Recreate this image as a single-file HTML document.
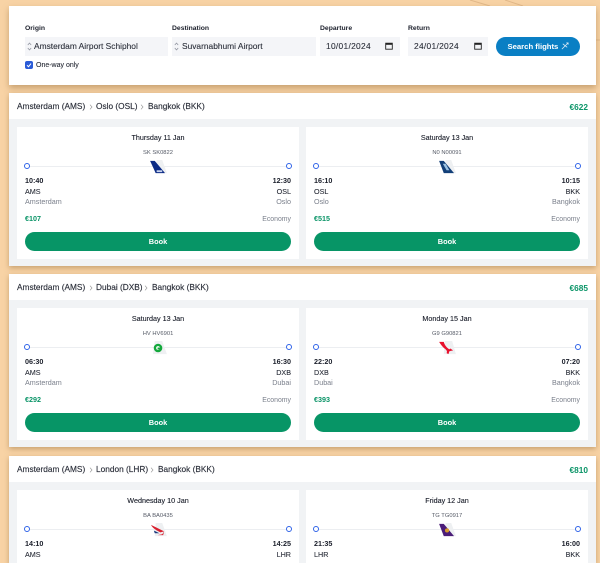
<!DOCTYPE html>
<html style="width:600px;height:563px;overflow:hidden"><head><meta charset="utf-8"><style>
html,body{margin:0;padding:0}
body{width:600px;height:563px;overflow:hidden;position:relative;background:#f8d3a5;font-family:"Liberation Sans",sans-serif;color:#1b1f2b}
div,span,svg{position:absolute}
#wrap{left:0;top:0;width:600px;height:563px;overflow:hidden}
.t{white-space:nowrap;line-height:12px;height:12px}
.top{left:9px;top:6px;width:587px;height:79px;background:#fff;box-shadow:0 3px 6px rgba(150,110,60,.5)}
.lab{font-size:6.8px;font-weight:bold;top:22.5px}
.fld{top:37px;height:19px;background:#f4f5f8;font-size:8.4px;line-height:19px;white-space:nowrap;color:#2b2f3a;-webkit-text-stroke:.1px #2b2f3a}
.route{left:9px;width:587px;height:173px;background:#f1f3f5;box-shadow:0 2px 5px rgba(150,110,60,.5)}
.hd{left:0;top:0;width:587px;height:26px;background:#fff}
.rt{left:8px;top:7px;font-size:8.3px;color:#2b2f3a;-webkit-text-stroke:.15px #2b2f3a}
.tot{right:8px;top:8px;font-size:8.3px;font-weight:bold;color:#0a9467}
.chev{top:11px}
.card{top:34px;width:282px;height:132px;background:#fff}
.c1{left:8px}.c2{left:297px}
.date{left:0;width:282px;text-align:center;top:5px;font-size:7.2px;color:#1b1f2b;-webkit-text-stroke:.12px #1b1f2b}
.fn{left:0;width:282px;text-align:center;top:20px;font-size:5.8px;color:#555a66}
.ln{left:13px;width:256px;top:39px;height:1px;background:#eceef1}
.dot{width:4px;height:4px;border:1.5px solid #2f63e8;border-radius:50%;background:#fff;top:36px}
.logo{left:133px;top:33px;width:17px;height:14px}
.b{font-size:7.2px;font-weight:bold;top:48px}
.r{text-align:right;right:8px}
.l{left:8px}
.code{font-size:7.2px;top:59px;color:#2b2f3a;-webkit-text-stroke:.1px #2b2f3a}
.city{font-size:7.2px;top:69px;color:#7b808c}
.price{font-size:7.2px;font-weight:bold;color:#0a9467;top:86px}
.eco{font-size:6.9px;color:#7b808c;top:87px}
.book{left:8px;width:266px;top:105px;height:19px;border-radius:10px;background:#079566;color:#fff;font-size:7.4px;font-weight:bold;text-align:center;line-height:19px}
</style></head><body><div id="wrap">
<svg style="left:0;top:0" width="600" height="563"><path d="M470 0l20 6M505 0l18 6M596 40h4" stroke="#e2b98a" fill="none"/></svg>

<div class="top"></div>
<div class="t lab" style="left:25px">Origin</div>
<div class="t lab" style="left:172px">Destination</div>
<div class="t lab" style="left:320px">Departure</div>
<div class="t lab" style="left:408px">Return</div>
<div class="fld" style="left:25px;width:143px;text-indent:9px">Amsterdam Airport Schiphol</div>
<div class="fld" style="left:172px;width:144px;text-indent:10px">Suvarnabhumi Airport</div>
<div class="fld" style="left:320px;width:80px;text-indent:6px;letter-spacing:.3px">10/01/2024</div>
<div class="fld" style="left:408px;width:80px;text-indent:6px;letter-spacing:.3px">24/01/2024</div>
<svg style="left:27px;top:42px" width="5" height="9" viewBox="0 0 5 9"><path d="M.8 3L2.5 1 4.2 3M.8 6L2.5 8 4.2 6" stroke="#8a8f9a" stroke-width=".7" fill="none"/></svg>
<svg style="left:174px;top:42px" width="5" height="9" viewBox="0 0 5 9"><path d="M.8 3L2.5 1 4.2 3M.8 6L2.5 8 4.2 6" stroke="#8a8f9a" stroke-width=".7" fill="none"/></svg>
<svg style="left:385px;top:42px" width="8" height="8" viewBox="0 0 8 8"><rect x=".7" y="1.2" width="6.6" height="6" fill="none" stroke="#222" stroke-width=".9"/><rect x=".7" y="1" width="6.6" height="1.8" fill="#222"/></svg>
<svg style="left:474px;top:42px" width="8" height="8" viewBox="0 0 8 8"><rect x=".7" y="1.2" width="6.6" height="6" fill="none" stroke="#222" stroke-width=".9"/><rect x=".7" y="1" width="6.6" height="1.8" fill="#222"/></svg>
<div style="left:496px;top:37px;width:84px;height:19px;border-radius:10px;background:#0a7fc4"></div>
<div class="t" style="left:507.5px;top:40.5px;font-size:7.7px;font-weight:bold;color:#fff">Search flights</div>
<svg style="left:561px;top:42px" width="8" height="8" viewBox="0 0 9 9"><path d="M1 8L8 1M2 2l5 4M6 1h2v2" stroke="#dfeaf5" stroke-width=".9" fill="none"/></svg>
<div style="left:25px;top:61px;width:8px;height:8px;border-radius:2px;background:#2a5bd7"></div>
<svg style="left:25px;top:61px" width="8" height="8" viewBox="0 0 8 8"><path d="M2 4.2L3.5 5.7 6 2.6" stroke="#fff" stroke-width="1" fill="none"/></svg>
<div class="t" style="left:36px;top:60px;font-size:7px;color:#2b2f3a;-webkit-text-stroke:.1px #2b2f3a">One-way only</div>

<!-- Route 1 -->
<div class="route" style="top:93px">
<div class="hd"></div>
<div class="t rt">Amsterdam (AMS)</div>
<svg class="chev" style="left:79.5px" width="4" height="6" viewBox="0 0 4 6"><path d="M1 .7L3 3 1 5.3" stroke="#999" stroke-width=".7" fill="none"/></svg>
<div class="t rt" style="left:87px">Oslo (OSL)</div>
<svg class="chev" style="left:130.5px" width="4" height="6" viewBox="0 0 4 6"><path d="M1 .7L3 3 1 5.3" stroke="#999" stroke-width=".7" fill="none"/></svg>
<div class="t rt" style="left:139px">Bangkok (BKK)</div>
<div class="t tot">€622</div>
<div class="card c1">
<div class="t date">Thursday 11 Jan</div><div class="t fn">SK SK0822</div><div class="ln"></div><div class="dot" style="left:6.5px"></div><div class="dot" style="left:268.5px"></div>
<svg class="logo" viewBox="0 0 18 15"><path d="M7 0h6l5 14H5z" fill="#eef0f2"/><path d="M0 1h5l11 13H6z" fill="#0b2a85"/><path d="M7 11h6v2H7z" fill="#c9d4ee"/></svg>
<div class="t b l">10:40</div><div class="t b r">12:30</div>
<div class="t code l">AMS</div><div class="t code r">OSL</div>
<div class="t city l">Amsterdam</div><div class="t city r">Oslo</div>
<div class="t price l">€107</div><div class="t eco r">Economy</div>
<div class="book">Book</div>
</div>
<div class="card c2">
<div class="t date">Saturday 13 Jan</div><div class="t fn">N0 N00091</div><div class="ln"></div><div class="dot" style="left:6.5px"></div><div class="dot" style="left:268.5px"></div>
<svg class="logo" viewBox="0 0 18 15"><path d="M7 0h6l5 14H5z" fill="#eef0f2"/><path d="M0 1h5l11 13H5z" fill="#123f78"/><path d="M4 4l3 0 4 7H8z" fill="#9cc3e4"/></svg>
<div class="t b l">16:10</div><div class="t b r">10:15</div>
<div class="t code l">OSL</div><div class="t code r">BKK</div>
<div class="t city l">Oslo</div><div class="t city r">Bangkok</div>
<div class="t price l">€515</div><div class="t eco r">Economy</div>
<div class="book">Book</div>
</div>
</div>

<!-- Route 2 -->
<div class="route" style="top:274px">
<div class="hd"></div>
<div class="t rt">Amsterdam (AMS)</div>
<svg class="chev" style="left:79.5px" width="4" height="6" viewBox="0 0 4 6"><path d="M1 .7L3 3 1 5.3" stroke="#999" stroke-width=".7" fill="none"/></svg>
<div class="t rt" style="left:87px">Dubai (DXB)</div>
<svg class="chev" style="left:135px" width="4" height="6" viewBox="0 0 4 6"><path d="M1 .7L3 3 1 5.3" stroke="#999" stroke-width=".7" fill="none"/></svg>
<div class="t rt" style="left:143px">Bangkok (BKK)</div>
<div class="t tot">€685</div>
<div class="card c1">
<div class="t date">Saturday 13 Jan</div><div class="t fn">HV HV6901</div><div class="ln"></div><div class="dot" style="left:6.5px"></div><div class="dot" style="left:268.5px"></div>
<svg class="logo" viewBox="0 0 18 15"><path d="M5 0h8l5 14H3z" fill="#eef0f2"/><circle cx="8.5" cy="7.5" r="4.6" fill="#14a83c"/><circle cx="8.5" cy="7.5" r="2" fill="#fff"/><path d="M8 7h3v2H8z" fill="#14a83c"/></svg>
<div class="t b l">06:30</div><div class="t b r">16:30</div>
<div class="t code l">AMS</div><div class="t code r">DXB</div>
<div class="t city l">Amsterdam</div><div class="t city r">Dubai</div>
<div class="t price l">€292</div><div class="t eco r">Economy</div>
<div class="book">Book</div>
</div>
<div class="card c2">
<div class="t date">Monday 15 Jan</div><div class="t fn">G9 G90821</div><div class="ln"></div><div class="dot" style="left:6.5px"></div><div class="dot" style="left:268.5px"></div>
<svg class="logo" viewBox="0 0 18 15"><path d="M6 0h8l4 14H5z" fill="#eef0f2"/><path d="M0 1h5c1 4 4 7 6 8l1-1 3 2-4 1-1 3-2-1c1-2 0-3-1-4C4 7 2 4 0 1z" fill="#e8112d"/></svg>
<div class="t b l">22:20</div><div class="t b r">07:20</div>
<div class="t code l">DXB</div><div class="t code r">BKK</div>
<div class="t city l">Dubai</div><div class="t city r">Bangkok</div>
<div class="t price l">€393</div><div class="t eco r">Economy</div>
<div class="book">Book</div>
</div>
</div>

<!-- Route 3 -->
<div class="route" style="top:456px;height:107px;overflow:hidden">
<div class="hd"></div>
<div class="t rt">Amsterdam (AMS)</div>
<svg class="chev" style="left:79.5px" width="4" height="6" viewBox="0 0 4 6"><path d="M1 .7L3 3 1 5.3" stroke="#999" stroke-width=".7" fill="none"/></svg>
<div class="t rt" style="left:87px">London (LHR)</div>
<svg class="chev" style="left:141px" width="4" height="6" viewBox="0 0 4 6"><path d="M1 .7L3 3 1 5.3" stroke="#999" stroke-width=".7" fill="none"/></svg>
<div class="t rt" style="left:149px">Bangkok (BKK)</div>
<div class="t tot">€810</div>
<div class="card c1" style="height:73px">
<div class="t date">Wednesday 10 Jan</div><div class="t fn">BA BA0435</div><div class="ln"></div><div class="dot" style="left:6.5px"></div><div class="dot" style="left:268.5px"></div>
<svg class="logo" viewBox="0 0 18 15"><path d="M6 0h7l5 14H5z" fill="#eef0f2"/><path d="M1 2l14 7-4 1C7 8 3 6 1 2z" fill="#d8202f"/><path d="M4 8l6 3-5 0z" fill="#1d3a7d"/><path d="M15 9l-1 4H8l5-1z" fill="#d8202f"/></svg>
<div class="t b l">14:10</div><div class="t b r">14:25</div>
<div class="t code l">AMS</div><div class="t code r">LHR</div>
</div>
<div class="card c2" style="height:73px">
<div class="t date">Friday 12 Jan</div><div class="t fn">TG TG0917</div><div class="ln"></div><div class="dot" style="left:6.5px"></div><div class="dot" style="left:268.5px"></div>
<svg class="logo" viewBox="0 0 18 15"><path d="M7 0h6l5 14H5z" fill="#eef0f2"/><path d="M0 1h5l11 13H5z" fill="#4b1d78"/><circle cx="8.5" cy="8" r="2.2" fill="#d89a2b"/></svg>
<div class="t b l">21:35</div><div class="t b r">16:00</div>
<div class="t code l">LHR</div><div class="t code r">BKK</div>
</div>
</div>
</div></body></html>
